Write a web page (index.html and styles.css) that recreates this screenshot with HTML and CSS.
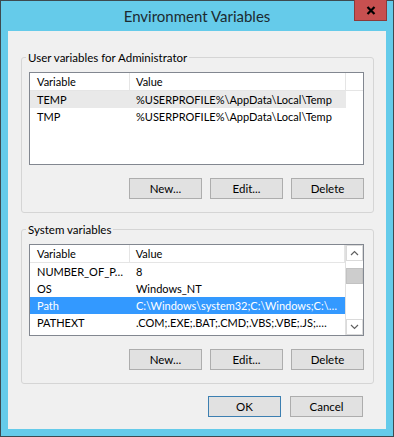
FILE: index.html
```html
<!DOCTYPE html>
<html lang="en">
<head>
    <meta charset="UTF-8">
    <title>Environment Variables</title>
    <link rel="stylesheet" href="styles.css">
</head>
<body>
    <div class="window">
        <div class="titlebar">
            <span></span>
            <span class="title">Environment Variables</span>
            <span class="close-wrap">
                <button class="close" title="Close">
                    <svg width="10" height="9" viewBox="0 0 10 9">
                        <path d="M1.5 1 L8.5 8 M8.5 1 L1.5 8" stroke="#000" stroke-width="2.2" fill="none"/>
                    </svg>
                </button>
            </span>
        </div>

        <div class="content">
            <fieldset class="group">
                <legend>User variables for Administrator</legend>
                <div class="list user-list">
                    <div class="list-main">
                        <div class="list-head">
                            <span class="col-var">Variable</span>
                            <span class="col-val">Value</span>
                            <span class="col-rest"></span>
                        </div>
                        <div class="list-row hot">
                            <span class="col-var">TEMP</span>
                            <span class="col-val">%USERPROFILE%\AppData\Local\Temp</span>
                        </div>
                        <div class="list-row">
                            <span class="col-var">TMP</span>
                            <span class="col-val">%USERPROFILE%\AppData\Local\Temp</span>
                        </div>
                    </div>
                </div>
                <div class="buttons">
                    <button class="btn">New...</button>
                    <button class="btn">Edit...</button>
                    <button class="btn">Delete</button>
                </div>
            </fieldset>

            <fieldset class="group">
                <legend>System variables</legend>
                <div class="list system-list">
                    <div class="list-main">
                        <div class="list-head">
                            <span class="col-var">Variable</span>
                            <span class="col-val">Value</span>
                        </div>
                        <div class="list-row">
                            <span class="col-var">NUMBER_OF_P…</span>
                            <span class="col-val">8</span>
                        </div>
                        <div class="list-row">
                            <span class="col-var">OS</span>
                            <span class="col-val">Windows_NT</span>
                        </div>
                        <div class="list-row selected">
                            <span class="col-var">Path</span>
                            <span class="col-val">C:\Windows\system32;C:\Windows;C:\…</span>
                        </div>
                        <div class="list-row">
                            <span class="col-var">PATHEXT</span>
                            <span class="col-val">.COM;.EXE;.BAT;.CMD;.VBS;.VBE;.JS;.…</span>
                        </div>
                    </div>
                    <div class="scrollbar">
                        <div class="arrow">
                            <svg width="9" height="6" viewBox="0 0 9 6"><path d="M1 5 L4.5 1.5 L8 5" stroke="#606060" stroke-width="1.2" fill="none"/></svg>
                        </div>
                        <div class="track">
                            <div class="thumb"></div>
                        </div>
                        <div class="arrow">
                            <svg width="9" height="6" viewBox="0 0 9 6"><path d="M1 1 L4.5 4.5 L8 1" stroke="#606060" stroke-width="1.2" fill="none"/></svg>
                        </div>
                    </div>
                </div>
                <div class="buttons">
                    <button class="btn">New...</button>
                    <button class="btn">Edit...</button>
                    <button class="btn">Delete</button>
                </div>
            </fieldset>

            <div class="dialog-buttons">
                <button class="btn default">OK</button>
                <button class="btn">Cancel</button>
            </div>
        </div>
    </div>
</body>
</html>
```

FILE: styles.css
```css
body {
    margin: 0;
    font-family: Lato, "Liberation Sans", sans-serif;
    font-size: 11px;
    color: #000;
    background: #fff;
}
.window {
    width: 394px;
    height: 437px;
    box-sizing: border-box;
    border: 1px solid #3d4a50;
    background: #65cbea;
    padding: 0 7px 7px 7px;
    display: flex;
    flex-direction: column;
}
.titlebar {
    height: 30px;
    display: grid;
    grid-template-columns: 1fr auto 1fr;
    align-items: start;
}
.title {
    font-size: 15px;
    line-height: 30px;
    color: #1c2a30;
}
.close-wrap {
    display: flex;
    justify-content: flex-end;
    margin-right: -1px;
}
.close {
    width: 33px;
    height: 21px;
    margin-top: -1px;
    padding: 0;
    border: 1px solid #8c3a3a;
    border-top: none;
    background: #c75050;
    display: flex;
    align-items: center;
    justify-content: center;
}
.content {
    flex: 1;
    background: #f0f0f0;
    padding: 19px 12px 0 13px;
    display: flex;
    flex-direction: column;
}
.group {
    margin: 0 0 9px 0;
    padding: 7px 9px 13px 7px;
    min-width: 0;
    border: 1px solid #d5d5d5;
    border-radius: 3px;
}
.group legend {
    padding: 0 2px;
    margin-left: -3px;
    line-height: 15px;
    height: 15px;
    font-size: 11.5px;
}
.list {
    background: #fff;
    border: 1px solid #828790;
    display: flex;
}
.user-list {
    height: 91px;
}
.system-list {
    height: 90px;
}
.list-main {
    flex: 1;
    overflow: hidden;
}
.list-head {
    display: flex;
    height: 17px;
    line-height: 17px;
    border-bottom: 1px solid #e5e5e5;
}
.list-head span {
    box-sizing: border-box;
    border-right: 1px solid #e5e5e5;
}
.list-head .col-rest {
    flex: 1;
    border-right: none;
}
.col-var {
    width: 100px;
    padding-left: 7px;
    box-sizing: border-box;
    white-space: nowrap;
}
.col-val {
    width: 216px;
    padding-left: 6px;
    box-sizing: border-box;
    white-space: nowrap;
    overflow: hidden;
}
.list-row {
    display: flex;
    width: 316px;
    height: 17px;
    line-height: 17px;
}
.list-row.hot {
    background: #e9e9e9;
}
.list-row.selected {
    background: #3399ff;
    color: #fff;
}
.scrollbar {
    width: 17px;
    display: flex;
    flex-direction: column;
    border-left: 1px solid #e0e0e0;
    background: #fff;
}
.arrow {
    height: 16px;
    border: 1px solid #dadada;
    box-sizing: border-box;
    display: flex;
    align-items: center;
    justify-content: center;
}
.track {
    flex: 1;
    padding-top: 7px;
}
.thumb {
    height: 16px;
    background: #cdcdcd;
    border: 1px solid #c2c2c2;
    box-sizing: border-box;
}
.buttons {
    display: flex;
    justify-content: flex-end;
    gap: 8px;
    margin-top: 13px;
}
.btn {
    width: 73px;
    height: 21px;
    padding: 0;
    font-family: inherit;
    font-size: 11.5px;
    color: #000;
    background: #e1e1e1;
    border: 1px solid #adadad;
}
.btn.default {
    border-color: #3c7fb1;
}
.dialog-buttons {
    display: flex;
    justify-content: flex-end;
    gap: 9px;
    margin-top: 3px;
    padding-right: 11px;
}
```
